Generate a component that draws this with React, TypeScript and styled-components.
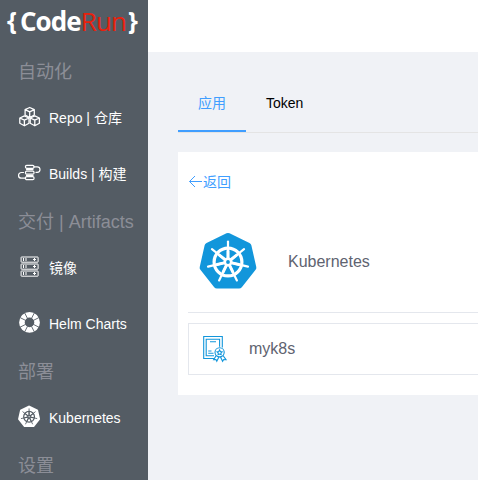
import React from 'react';
import styled, { createGlobalStyle } from 'styled-components';

const Global = createGlobalStyle`
  * { box-sizing: border-box; }
  html, body { margin: 0; height: 100%; overflow: hidden; }
  body {
    background: #f0f2f6;
    font-family: "Liberation Sans", "Noto Sans CJK SC", sans-serif;
    font-size: 14px;
  }
`;

const Page = styled.div`
  display: flex;
  width: 100%;
  height: 100vh;
  overflow: hidden;
`;

const Sidebar = styled.aside`
  flex: 0 0 148px;
  background: #545c64;
  overflow: hidden;
`;

const Logo = styled.div`
  display: flex;
  height: 52px;
  padding: 6px 0 0 7px;
  font: 700 26px/30px "Open Sans", sans-serif;
  letter-spacing: -0.9px;
  white-space: nowrap;
`;

const LogoPart = styled.span<{ $red?: boolean; $shift?: number }>`
  color: ${p => (p.$red ? '#e8210d' : '#fff')};
  font-weight: ${p => (p.$red ? 400 : 700)};
  margin-left: ${p => p.$shift ?? 0}px;
`;

const Brace = styled(LogoPart)`
  font-size: 25px;
  line-height: 29px;
`;

const GroupTitle = styled.div`
  height: 38px;
  padding-left: 18px;
  line-height: 41px;
  font-size: 18px;
  color: #8c8e97;
  white-space: nowrap;
`;

const MenuItem = styled.div`
  display: flex;
  align-items: center;
  height: 56px;
  padding-left: 18px;
  color: #fff;
  line-height: 56px;
  white-space: nowrap;
`;

const MenuIcon = styled.svg`
  flex: none;
  width: 24px;
  height: 24px;
  margin: 0 7px 3px 0;
`;

const Main = styled.main`
  flex: 1;
  min-width: 0;
`;

const Header = styled.header`
  height: 52px;
  background: #fff;
`;

const Content = styled.div`
  padding: 20px 0 0 30px;
`;

const Tabs = styled.nav`
  display: flex;
  height: 61px;
  border-bottom: 1px solid #e4e4e4;
`;

const Tab = styled.div<{ $active?: boolean }>`
  height: 60px;
  padding: 0 20px;
  line-height: 62px;
  color: ${p => (p.$active ? '#409eff' : '#000')};
  border-bottom: 2px solid ${p => (p.$active ? '#409eff' : 'transparent')};
`;

const Panel = styled.section`
  height: 243px;
  margin-top: 19px;
  padding: 20px 0 0 10px;
  background: #fff;
  color: #606370;
  font-size: 16px;
`;

const Back = styled.a`
  display: flex;
  align-items: center;
  height: 20px;
  font-size: 14px;
  line-height: 20px;
  color: #409eff;
  svg { width: 14px; height: 14px; margin-right: 1px; }
`;

const Provider = styled.div`
  display: flex;
  align-items: center;
  height: 121px;
  padding: 20px 0 0 10px;
  border-bottom: 1px solid #e4e7ed;
  > svg { width: 60px; height: 60px; margin-right: 30px; }
  > span { padding-bottom: 1px; }
`;

const Cluster = styled.div`
  display: flex;
  align-items: center;
  height: 52px;
  margin-top: 10px;
  padding-left: 12px;
  border: 1px solid #e4e7ed;
  border-right: 0;
  > svg { width: 28px; height: 28px; margin-right: 20px; }
  > span { padding-bottom: 1px; }
`;

const at = (r: number, turn: number) => {
  const a = (turn * 2 * Math.PI) / 7;
  return [30 + r * Math.sin(a), 30 - r * Math.cos(a)];
};

function KubeShape({ fill, line }: { fill: string; line: string }) {
  const corners = Array.from({ length: 7 }, (_, i) => at(25.5, i).join(',')).join(' ');
  return (
    <>
      <polygon points={corners} fill={fill} stroke={fill} strokeWidth="7" strokeLinejoin="round" />
      <g fill="none" stroke={line}>
        <circle cx="30" cy="30" r="13.9" strokeWidth="3.2" />
        <circle cx="30" cy="30" r="3.2" strokeWidth="2.6" />
        {Array.from({ length: 7 }, (_, i) => {
          const [x1, y1] = at(4, i);
          const [x2, y2] = at(20.5, i);
          const [x3, y3] = at(11, i);
          return (
            <g key={i} strokeLinecap="round">
              <line x1={x1} y1={y1} x2={x2} y2={y2} strokeWidth="2.2" />
              <line x1={x1} y1={y1} x2={x3} y2={y3} strokeWidth="3" />
            </g>
          );
        })}
      </g>
    </>
  );
}

function Cube({ x, y }: { x: number; y: number }) {
  return <path transform={`translate(${x} ${y})`} d="M0-5 4.6-2.8V2.5L0 5-4.6 2.5V-2.8ZM-4.6-2.8 0-.6 4.6-2.8M0-.6V5" />;
}

const CubesIcon = () => (
  <MenuIcon viewBox="0 0 24 24" fill="none" stroke="#fff" strokeWidth="1.3" strokeLinejoin="round">
    <Cube x={11.7} y={7.5} />
    <Cube x={6.4} y={15.8} />
    <Cube x={16.8} y={15.8} />
  </MenuIcon>
);

const BuildsIcon = () => (
  <MenuIcon viewBox="0 0 24 24" fill="none" stroke="#fff" strokeWidth="1.2" strokeLinecap="round">
    <rect x="7.5" y="4.3" width="8.5" height="3" rx="1.2" />
    <rect x="7.5" y="10.1" width="8.5" height="3" rx="1.2" />
    <rect x="7.5" y="15.6" width="8.5" height="3" rx="1.2" />
    <path d="M16 5.8h3.2a2.8 2.8 0 0 1 0 5.6H18M5.5 11.5H3.4a2.85 2.85 0 0 0 0 5.7h4.1M8.5 8.7h6.5M8.5 14.4h6.5" />
  </MenuIcon>
);

const ServersIcon = () => (
  <MenuIcon viewBox="0 0 24 24" fill="none" stroke="#fff" strokeWidth="1">
    {[2, 9, 16].map(y => (
      <g key={y}>
        <rect x="3.1" y={y} width="17" height="5.2" rx=".4" />
        <path d={`M5.5 ${y + 1}v3M8 ${y + 1}v3M15 ${y + 2.5}h3M16.5 ${y + 1}v3`} />
      </g>
    ))}
  </MenuIcon>
);

const LifebuoyIcon = () => (
  <MenuIcon viewBox="0 0 24 24" fill="none">
    <circle cx="11.5" cy="11.4" r="7.6" stroke="#fff" strokeWidth="5.6" />
    <g stroke="#545c64" strokeWidth=".8">
      {[27, 63, 117, 153, 207, 243, 297, 333].map(a => (
        <path key={a} d="M11.5 7V.5" transform={`rotate(${a} 11.5 11.4)`} />
      ))}
    </g>
  </MenuIcon>
);

const KubeMenuIcon = () => (
  <MenuIcon viewBox="1.4 -.4 62 62">
    <KubeShape fill="#fff" line="#545c64" />
  </MenuIcon>
);

const CertificateIcon = () => (
  <svg viewBox="0 0 28 28" fill="none" stroke="#1296db" strokeWidth="1.1">
    <path d="M13 23.5H2.7V1.5h18.6v11" />
    <path d="M13 20.8H5.2V4.3h13.4v7.5M9 6.8h6M7.2 16h3.3M7.2 18.3h5.3" />
    <circle cx="18.6" cy="17.3" r="4.6" />
    <path d="m18.6 15 .8 1.5 1.7.3-1.2 1.2.2 1.7-1.5-.7-1.5.7.2-1.7-1.2-1.2 1.7-.3ZM15.2 20.5l-2.5 4.2 2.3-.2.8 1.8 2.1-4.2M22 20.5l3 4.2-2.3-.2-1.1 1.8-2.1-4.2" />
  </svg>
);

export default function App() {
  return (
    <Page>
      <Global />
      <Sidebar>
        <Logo>
          <Brace>{'{'}</Brace>
          <LogoPart $shift={4}>Code</LogoPart>
          <LogoPart $red>Run</LogoPart>
          <Brace $shift={2}>{'}'}</Brace>
        </Logo>
        <GroupTitle>自动化</GroupTitle>
        <MenuItem><CubesIcon />Repo | 仓库</MenuItem>
        <MenuItem><BuildsIcon />Builds | 构建</MenuItem>
        <GroupTitle>交付 | Artifacts</GroupTitle>
        <MenuItem><ServersIcon />镜像</MenuItem>
        <MenuItem><LifebuoyIcon />Helm Charts</MenuItem>
        <GroupTitle>部署</GroupTitle>
        <MenuItem><KubeMenuIcon />Kubernetes</MenuItem>
        <GroupTitle>设置</GroupTitle>
      </Sidebar>
      <Main>
        <Header />
        <Content>
          <Tabs>
            <Tab $active>应用</Tab>
            <Tab>Token</Tab>
          </Tabs>
          <Panel>
            <Back>
              <svg viewBox="0 0 14 14" fill="none" stroke="#409eff" strokeWidth="1">
                <path d="M7 1 1.5 6.5 7 12M1.5 6.5H14" />
              </svg>
              返回
            </Back>
            <Provider>
              <svg viewBox="0 0 60 60"><KubeShape fill="#1296db" line="#fff" /></svg>
              <span>Kubernetes</span>
            </Provider>
            <Cluster>
              <CertificateIcon />
              <span>myk8s</span>
            </Cluster>
          </Panel>
        </Content>
      </Main>
    </Page>
  );
}
